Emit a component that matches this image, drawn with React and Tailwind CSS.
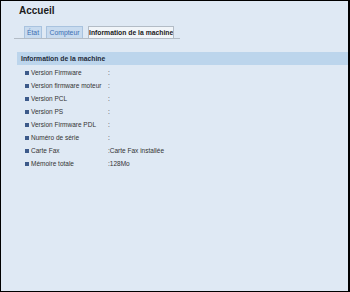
import React from "react";

const rows = [
  { label: "Version Firmware", value: "" },
  { label: "Version firmware moteur", value: "" },
  { label: "Version PCL", value: "" },
  { label: "Version PS", value: "" },
  { label: "Version Firmware PDL", value: "" },
  { label: "Numéro de série", value: "" },
  { label: "Carte Fax", value: "Carte Fax installée" },
  { label: "Mémoire totale", value: "128Mo" },
];

export default function App() {
  return (
    <div
      className="w-[350px] h-[292px] border border-r-2 border-black bg-[#dfe9f4] overflow-hidden"
      style={{ fontFamily: '"Liberation Sans", Arial, sans-serif' }}
    >
      <h1 className="pt-[4px] pl-[18px] text-[10px] leading-[12px] font-bold text-[#1b1b1b]">
        Accueil
      </h1>

      {/* tabs */}
      <div className="mt-[10px] ml-[13px] w-[166px] h-[12px] flex items-end pl-[10px] border-b border-[#b3bcc6] whitespace-nowrap">
        <div className="shrink-0 w-[18px] h-[12px] border border-b-0 border-[#a9c3df] bg-[#c8dbef] text-[6.8px] leading-[11px] text-center text-[#3d6db2]">
          État
        </div>
        <div className="shrink-0 ml-[4px] w-[37px] h-[12px] border border-b-0 border-[#a9c3df] bg-[#c8dbef] text-[6.8px] leading-[11px] text-center text-[#3d6db2]">
          Compteur
        </div>
        <div className="shrink-0 ml-[5px] w-[86px] h-[12px] border border-b-0 border-[#b3bcc6] bg-[#f1f5f9] text-[6.8px] leading-[11px] text-center font-bold text-[#1b1b1b] overflow-hidden">
          Information de la machine
        </div>
      </div>

      {/* section */}
      <div className="mt-[13px] ml-[16px]">
        <div className="h-[13px] bg-[#bcd5ec] pl-[4px] text-[6.8px] leading-[13px] font-bold text-[#1f2b3a] whitespace-nowrap">
          Information de la machine
        </div>
        <div className="flex flex-col pt-[1px]">
          {rows.map((row) => (
            <div key={row.label} className="h-[13px] flex items-center text-[6.5px] text-[#333333] whitespace-nowrap">
              <span className="ml-[8px] w-[4px] h-[4px] bg-[#3d5a8a]"></span>
              <span className="ml-[2px] w-[77px]">{row.label}</span>
              <span>:{row.value}</span>
            </div>
          ))}
        </div>
      </div>
    </div>
  );
}
